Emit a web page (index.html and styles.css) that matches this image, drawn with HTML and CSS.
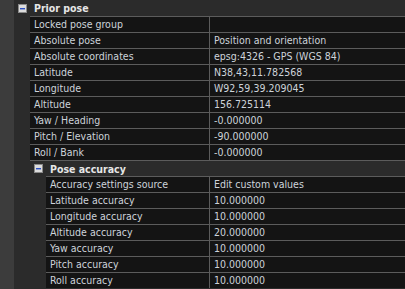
FILE: index.html
```html
<!DOCTYPE html>
<html lang="en">
<head>
    <meta charset="UTF-8">
    <title>Pose properties</title>
    <link rel="stylesheet" href="styles.css">
</head>
<body>
    <div class="tree">
        <div class="group">
            <div class="group-head">
                <svg class="toggle" width="9" height="9" viewBox="0 0 9 9">
                    <rect x="0.5" y="0.5" width="8" height="8" fill="#dcdcdc" stroke="#8a8a8a"/>
                    <rect x="2" y="4" width="5" height="1.4" fill="#2a4fc4"/>
                </svg>
                <span class="group-title">Prior pose</span>
            </div>
            <div class="group-body">
                <div class="row"><span class="name">Locked pose group</span><span class="value"></span></div>
                <div class="row"><span class="name">Absolute pose</span><span class="value">Position and orientation</span></div>
                <div class="row"><span class="name">Absolute coordinates</span><span class="value">epsg:4326 - GPS (WGS 84)</span></div>
                <div class="row"><span class="name">Latitude</span><span class="value">N38,43,11.782568</span></div>
                <div class="row"><span class="name">Longitude</span><span class="value">W92,59,39.209045</span></div>
                <div class="row"><span class="name">Altitude</span><span class="value">156.725114</span></div>
                <div class="row"><span class="name">Yaw / Heading</span><span class="value">-0.000000</span></div>
                <div class="row"><span class="name">Pitch / Elevation</span><span class="value">-90.000000</span></div>
                <div class="row"><span class="name">Roll / Bank</span><span class="value">-0.000000</span></div>

                <div class="group sub">
                    <div class="group-head">
                        <svg class="toggle" width="9" height="9" viewBox="0 0 9 9">
                            <rect x="0.5" y="0.5" width="8" height="8" fill="#dcdcdc" stroke="#8a8a8a"/>
                            <rect x="2" y="4" width="5" height="1.4" fill="#2a4fc4"/>
                        </svg>
                        <span class="group-title">Pose accuracy</span>
                    </div>
                    <div class="group-body">
                        <div class="row"><span class="name">Accuracy settings source</span><span class="value">Edit custom values</span></div>
                        <div class="row"><span class="name">Latitude accuracy</span><span class="value">10.000000</span></div>
                        <div class="row"><span class="name">Longitude accuracy</span><span class="value">10.000000</span></div>
                        <div class="row"><span class="name">Altitude accuracy</span><span class="value">20.000000</span></div>
                        <div class="row"><span class="name">Yaw accuracy</span><span class="value">10.000000</span></div>
                        <div class="row"><span class="name">Pitch accuracy</span><span class="value">10.000000</span></div>
                        <div class="row"><span class="name">Roll accuracy</span><span class="value">10.000000</span></div>
                    </div>
                </div>
            </div>
        </div>
    </div>
</body>
</html>
```

FILE: styles.css
```css
:root {
    --strip-color: #3c3c3c;
    --panel-color: #2b2b2b;
    --cell-color: #141414;
    --line-color: #5c5c5c;
    --text-color: #cdd3da;
}

* {
    margin: 0;
    padding: 0;
    box-sizing: border-box;
}

body {
    font-family: "DejaVu Sans Condensed", "DejaVu Sans", sans-serif;
    font-stretch: condensed;
    font-size: 10.5px;
    color: var(--text-color);
    background-color: var(--panel-color);
}

.tree {
    border-left: 14px solid var(--strip-color);
    min-height: 289px;
    background-color: var(--panel-color);
}

.group-head {
    display: flex;
    align-items: center;
    height: 16px;
    padding-left: 4px;
}

.sub > .group-head {
    border-top: 1px solid var(--line-color);
}

.toggle {
    flex: none;
    display: block;
}

.group-title {
    margin-left: 7px;
    font-weight: bold;
    color: #e6e6e6;
}

.group-body {
    padding-left: 16px;
}

.row {
    display: grid;
    grid-template-columns: 1fr 195px;
    height: 16px;
    border-top: 1px solid var(--line-color);
    background-color: var(--cell-color);
    line-height: 15px;
}

.name {
    padding-left: 4px;
    border-right: 1px solid var(--line-color);
    white-space: nowrap;
    overflow: hidden;
}

.value {
    padding-left: 4px;
    white-space: nowrap;
    overflow: hidden;
}
```
